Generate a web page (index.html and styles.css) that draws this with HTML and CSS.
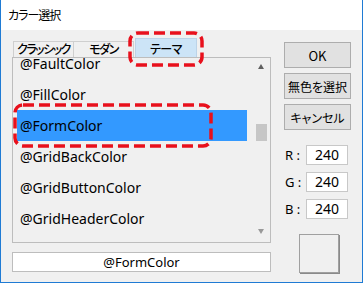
FILE: index.html
```html
<!DOCTYPE HTML>
<html>
<head>
	<meta charset="utf-8">
	<title>カラー選択</title>
	<link rel="stylesheet" href="styles.css">
</head>
<body>

<div class="window">
  <div class="titlebar">カラー選択</div>

  <div class="dialog">
    <!-- левая часть: вкладки + список -->
    <div class="left">
      <div class="tabs">
        <div class="tab">クラッシック</div>
        <div class="tab">モダン</div>
        <div class="tab active">テーマ
          <svg class="mark mark-tab" viewBox="0 0 76 36"><rect x="2" y="2" width="72" height="32" rx="8"/></svg>
        </div>
      </div>

      <div class="listbox">
        <ul class="items">
          <li class="cut">@FaultColor</li>
          <li>@FillColor</li>
          <li class="selected">@FormColor
            <svg class="mark mark-row" viewBox="0 0 200 45"><rect x="2" y="2" width="196" height="41" rx="8"/></svg>
          </li>
          <li>@GridBackColor</li>
          <li>@GridButtonColor</li>
          <li>@GridHeaderColor</li>
        </ul>
        <div class="scrollbar">
          <span class="arrow up"></span>
          <span class="thumb"></span>
          <span class="arrow down"></span>
        </div>
      </div>

      <div class="field">@FormColor</div>
    </div>

    <!-- правая часть: кнопки и RGB -->
    <div class="right">
      <button class="btn">OK</button>
      <button class="btn">無色を選択</button>
      <button class="btn">キャンセル</button>

      <div class="rgb">
        <div class="rgb-row"><span class="lbl">R :</span><span class="num">240</span></div>
        <div class="rgb-row"><span class="lbl">G :</span><span class="num">240</span></div>
        <div class="rgb-row"><span class="lbl">B :</span><span class="num">240</span></div>
      </div>

      <div class="swatch"></div>
    </div>
  </div>
</div>

</body>
</html>
```

FILE: styles.css
```css
body {
  margin: 0;
  background: #fff;
  font-family: "Noto Sans", "Noto Sans CJK JP", sans-serif;
  color: #000;
}

.window {
  width: 361px;
  height: 282px;
  border: 1px solid #1f7bd4;
  border-top: 0;
  background: #f0f0f0;
  display: flex;
  flex-direction: column;
}

.titlebar {
  height: 30px;
  flex: none;
  background: #fff;
  padding-left: 7px;
  font: 12px/30px "Noto Sans CJK JP", sans-serif;
  font-feature-settings: "palt";
  letter-spacing: -1px;
}

.dialog {
  display: flex;
  padding: 8px 0 0 11px;
  gap: 13px;
}

.left {
  width: 259px;
  display: flex;
  flex-direction: column;
}

/* вкладки */
.tabs {
  display: flex;
  align-items: flex-end;
  height: 19px;
  padding-left: 1px;
}

.tab {
  position: relative;
  width: 59px;
  height: 15px;
  border: 1px solid #cfcfcf;
  border-bottom: 0;
  font: 500 12px/14px "Noto Sans CJK JP", sans-serif;
  font-feature-settings: "palt";
  text-align: center;
  letter-spacing: -1.5px;
  white-space: nowrap;
}

.tab + .tab {
  border-left: 0;
}

.tab.active {
  width: 60px;
  height: 18px;
  line-height: 19px;
  margin-left: 1px;
  border: 1px solid #bcd3e8;
  border-bottom: 0;
  background: #cce4f7;
  letter-spacing: -0.5px;
}

/* красные пометки */
.mark {
  position: absolute;
  fill: none;
  stroke: #e8101c;
  stroke-width: 3.5;
  stroke-dasharray: 11 5;
  z-index: 5;
}

.mark-tab {
  left: -8px;
  top: -8px;
  width: 76px;
  height: 36px;
}

.mark-row {
  left: -4px;
  top: -7px;
  width: 200px;
  height: 45px;
}

/* список */
.listbox {
  height: 184px;
  border: 1px solid #bdbdbd;
  display: flex;
  overflow: hidden;
}

.items {
  list-style: none;
  margin: 0;
  padding: 0 6px 0 4px;
  width: 230px;
  font-size: 14px;
}

.items li {
  position: relative;
  height: 31px;
  line-height: 31px;
  padding-left: 3px;
}

/* верхний элемент прокручен наполовину */
.items li.cut {
  height: 21px;
  line-height: 11px;
}

.items li.selected {
  background: #3399ff;
}

.scrollbar {
  width: 16px;
  display: flex;
  flex-direction: column;
  align-items: center;
}

.arrow {
  width: 0;
  height: 0;
  border-left: 3.5px solid transparent;
  border-right: 3.5px solid transparent;
}

.arrow.up {
  margin-top: 6px;
  border-bottom: 5px solid #606060;
}

.arrow.down {
  margin-top: auto;
  margin-bottom: 8px;
  border-top: 5px solid #999;
}

.thumb {
  width: 11px;
  height: 17px;
  margin-top: 55px;
  background: #c6c6c6;
}

.field {
  margin-top: 9px;
  height: 18px;
  border: 1px solid #bdbdbd;
  background: #fff;
  text-align: center;
  font-size: 13px;
  line-height: 18px;
}

/* правая колонка */
.right {
  width: 67px;
  display: flex;
  flex-direction: column;
}

.btn {
  height: 26px;
  margin: 4px 0 1px;
  padding: 0;
  border: 1px solid #adadad;
  background: #e1e1e1;
  font: 12px "Noto Sans CJK JP", sans-serif;
  font-feature-settings: "palt";
  color: #000;
}

.btn:first-child {
  font-size: 13px;
}

.rgb {
  margin-top: 14px;
  display: flex;
  flex-direction: column;
  gap: 7px;
}

.rgb-row {
  display: flex;
  align-items: center;
  height: 20px;
}

.lbl {
  width: 21px;
  padding-left: 1px;
  font-size: 13px;
}

.num {
  width: 40px;
  height: 18px;
  border: 1px solid #c8c8c8;
  background: #fff;
  text-align: center;
  font-size: 14px;
  line-height: 18px;
}

.swatch {
  width: 38px;
  height: 37px;
  margin: 15px 0 0 15px;
  border: 1px solid #a0a0a0;
  box-shadow: 1px 1px 0 #8a8a8a;
  background: #f0f0f0;
}
```
